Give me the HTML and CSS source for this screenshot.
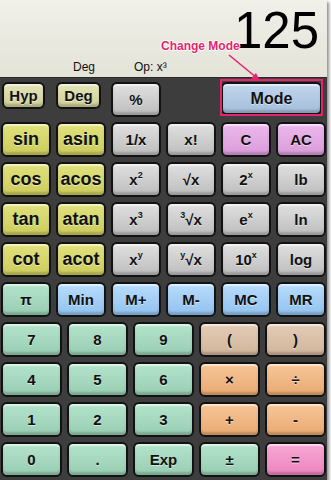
FILE: index.html
```html
<!DOCTYPE html>
<html lang="en">
<head>
  <meta charset="UTF-8">
  <meta name="viewport" content="width=device-width, initial-scale=1.0">
  <title>Scientific Calculator</title>
  <link rel="stylesheet" href="styles.css">
</head>
<body>
  <div class="calc">
    <div class="display">
      <div class="result">125</div>
      <div class="status">
        <span>Deg</span>
        <span>Op: x³</span>
      </div>
    </div>

    <div class="keys">
      <div class="fn-grid">
        <button class="key khaki small">Hyp</button>
        <button class="key khaki small deg">Deg</button>
        <button class="key gray">%</button>
        <span></span>
        <button class="key sky mode">Mode</button>

        <button class="key yellow">sin</button>
        <button class="key yellow">asin</button>
        <button class="key gray">1/x</button>
        <button class="key gray">x!</button>
        <button class="key pink">C</button>
        <button class="key pink">AC</button>

        <button class="key yellow">cos</button>
        <button class="key yellow">acos</button>
        <button class="key gray">x<span class="sup">2</span></button>
        <button class="key gray">√x</button>
        <button class="key gray">2<span class="sup">x</span></button>
        <button class="key gray">lb</button>

        <button class="key yellow">tan</button>
        <button class="key yellow">atan</button>
        <button class="key gray">x<span class="sup">3</span></button>
        <button class="key gray"><span class="sup">3</span>√x</button>
        <button class="key gray">e<span class="sup">x</span></button>
        <button class="key gray">ln</button>

        <button class="key yellow">cot</button>
        <button class="key yellow">acot</button>
        <button class="key gray">x<span class="sup">y</span></button>
        <button class="key gray"><span class="sup">y</span>√x</button>
        <button class="key gray">10<span class="sup">x</span></button>
        <button class="key gray">log</button>

        <button class="key green">π</button>
        <button class="key blue">Min</button>
        <button class="key blue">M+</button>
        <button class="key blue">M-</button>
        <button class="key blue">MC</button>
        <button class="key blue">MR</button>
      </div>

      <div class="num-grid">
        <button class="key green">7</button>
        <button class="key green">8</button>
        <button class="key green">9</button>
        <button class="key tan">(</button>
        <button class="key tan">)</button>

        <button class="key green">4</button>
        <button class="key green">5</button>
        <button class="key green">6</button>
        <button class="key orange">×</button>
        <button class="key orange">÷</button>

        <button class="key green">1</button>
        <button class="key green">2</button>
        <button class="key green">3</button>
        <button class="key orange">+</button>
        <button class="key orange">-</button>

        <button class="key green">0</button>
        <button class="key green">.</button>
        <button class="key green">Exp</button>
        <button class="key green">±</button>
        <button class="key rose">=</button>
      </div>
    </div>

    <!-- annotation drawn over the screenshot -->
    <div class="note-label">Change Mode</div>
    <svg class="note-arrow" width="40" height="34" viewBox="0 0 40 34">
      <line x1="2" y1="2" x2="30" y2="25" stroke="#e4246c" stroke-width="1.6"/>
      <polygon points="33,28 24,25.5 29,20" fill="#e4246c"/>
    </svg>
    <div class="note-box"></div>
  </div>
</body>
</html>
```

FILE: styles.css
```css
body { margin: 0; background: #fff; font-family: "Liberation Sans", Arial, sans-serif; }

.calc { position: relative; width: 327px; height: 480px; display: flex; flex-direction: column; background: #3d3d3d; box-shadow: 2px 2px 3px rgba(0,0,0,.45); overflow: hidden; }

.display { height: 77px; flex: none; background: linear-gradient(#f1f0e9, #e4e3d8); border-bottom: 1px solid #2a2a2a; box-sizing: content-box; }
.result { font-size: 51px; line-height: 52px; text-align: right; padding: 5px 8px 0 0; color: #000; }
.status { display: flex; gap: 39px; padding: 3px 0 0 73px; font-size: 12px; line-height: 14px; color: #111; }

.keys { display: flex; flex-direction: column; gap: 5px; padding: 4px 1px 3px 1px; }
.fn-grid { display: grid; grid-template-columns: repeat(6, 50px); grid-auto-rows: 35px; gap: 5px; }
.num-grid { display: grid; grid-template-columns: repeat(5, 61px); grid-auto-rows: 35px; gap: 5px; }

.key {
  margin: 0; padding: 0; box-sizing: border-box;
  border: 2px solid #121212; border-radius: 6px;
  font: bold 15px "Liberation Sans", Arial, sans-serif; color: #111;
  text-shadow: 0 1px 0 rgba(255,255,255,.55);
  box-shadow: inset 0 2px 1px rgba(255,255,255,.55), inset 0 -3px 2px rgba(0,0,0,.18);
  display: flex; align-items: center; justify-content: center;
}
.sup { font-size: 9px; position: relative; top: -5px; }

.small { width: 43px; height: 27px; align-self: start; margin-left: 1px; }
.deg { width: 45px; margin-left: 0; }
.mode { grid-column: 5 / 7; margin-right: 4px; height: 33px; font-size: 16px; }

.khaki { background: linear-gradient(#e4e4b8, #cfcf98); }
.yellow { background: linear-gradient(#e2e27e, #cbcb5c); font-size: 18px; }
.gray { background: linear-gradient(#e0e0e0, #bdbdbd); }
.pink { background: linear-gradient(#ecb8ec, #d99cd9); }
.sky { background: linear-gradient(#c0d6ec, #a4bedb); }
.blue { background: linear-gradient(#b8dcfc, #92c2ee); }
.green { background: linear-gradient(#b4e4cc, #98cdb2); }
.tan { background: linear-gradient(#e4ccb6, #d0b59b); }
.orange { background: linear-gradient(#f6c698, #e9aa72); }
.rose { background: linear-gradient(#f8a8d4, #ec84be); }

.num-grid .key { font-size: 15px; }

.note-label {
  position: absolute; left: 161px; top: 39px;
  font-size: 12px; font-weight: bold; color: #e4246c;
  text-shadow: 1px 0 0 #fff, -1px 0 0 #fff, 0 1px 0 #fff, 0 -1px 0 #fff;
}
.note-arrow { position: absolute; left: 227px; top: 53px; }
.note-box { position: absolute; left: 220px; top: 79px; width: 103px; height: 37px; box-sizing: border-box; border: 2px solid #e4246c; }
```
